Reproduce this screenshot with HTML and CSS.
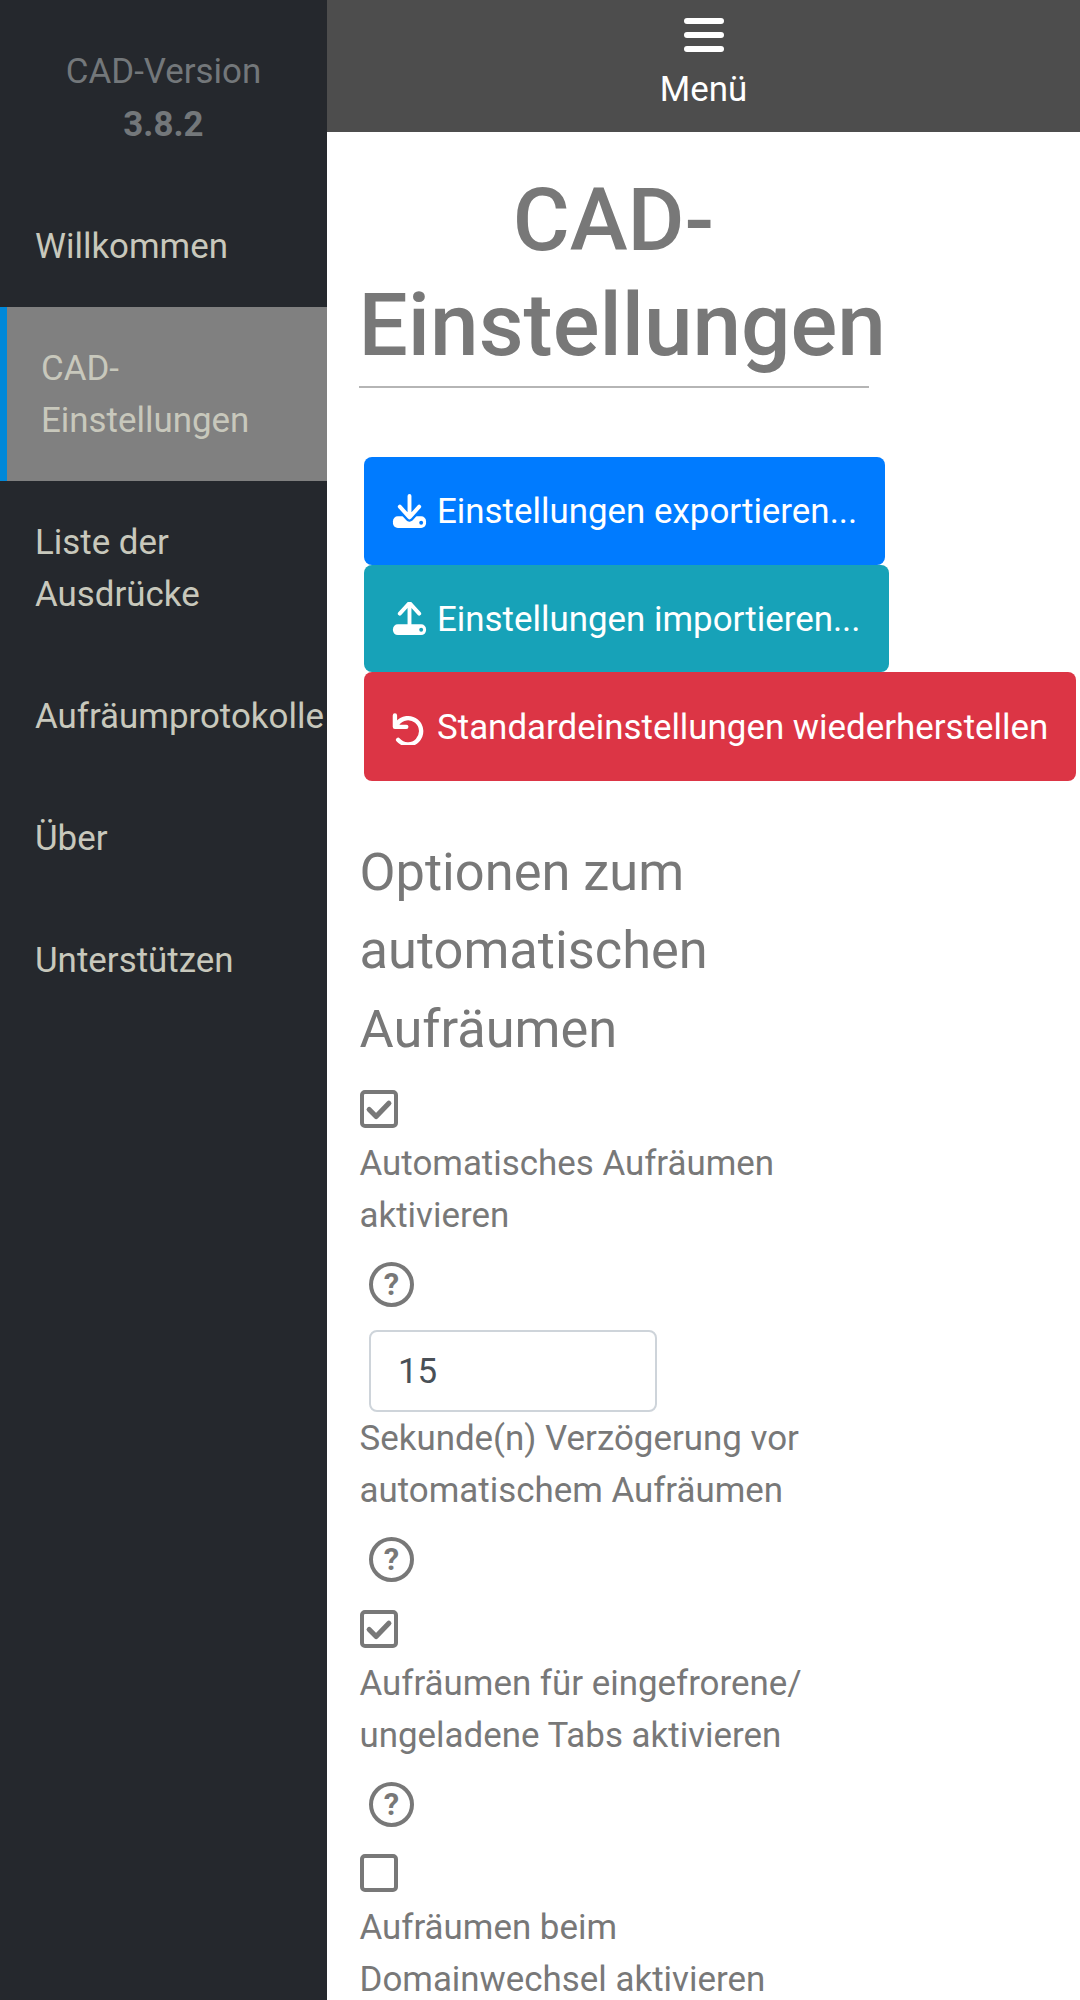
FILE: index.html
```html
<!DOCTYPE html>
<html>

<head>
    <title>CAD-Einstellungen</title>
    <link rel="stylesheet" href="styles.css">
</head>

<body>
    <div id="app">
        <nav id="sidebar">
            <div id="version">CAD-Version<strong>3.8.2</strong></div>
            <a class="nav-item">Willkommen</a>
            <a class="nav-item active">CAD-Einstellungen</a>
            <a class="nav-item">Liste der Ausdrücke</a>
            <a class="nav-item">Aufräumprotokolle</a>
            <a class="nav-item">Über</a>
            <a class="nav-item">Unterstützen</a>
        </nav>
        <div id="main">
            <div id="topbar">
                <svg class="menu-icon" viewBox="0 0 40 34">
                    <rect x="0" y="0" width="40" height="6" rx="3" />
                    <rect x="0" y="14" width="40" height="6" rx="3" />
                    <rect x="0" y="28" width="40" height="6" rx="3" />
                </svg>
                <span>Menü</span>
            </div>
            <div id="content">
                <h1>CAD-Einstellungen</h1>
                <div id="actions">
                    <div><button class="btn btn-blue">
                        <svg class="btn-icon" viewBox="0 0 36 36">
                            <rect class="tray" x="1" y="23" width="34" height="12" rx="5" />
                            <path class="knockout" d="M8 13l10 11 10-11" />
                            <path class="line" d="M18 2v22M8 13l10 11 10-11" />
                            <circle class="hole" cx="30" cy="29.500" r="2" />
                        </svg>
                        Einstellungen exportieren...</button></div>
                    <div><button class="btn btn-teal">
                        <svg class="btn-icon" viewBox="0 0 36 36">
                            <rect class="tray" x="1" y="23" width="34" height="11" rx="5" />
                            <path class="line" d="M18 24V2M8 12L18 1l10 11" />
                            <circle class="hole" cx="30" cy="28.500" r="2" />
                        </svg>
                        Einstellungen importieren...</button></div>
                    <div><button class="btn btn-red">
                        <svg class="btn-icon" viewBox="0 0 36 36">
                            <path class="line undo" d="M6.300 30.700A13.500 13.500 0 1 0 5.500 14M3 5.700V17.300H14.700" />
                        </svg>
                        Standardeinstellungen wiederherstellen</button></div>
                </div>

                <h3>Optionen zum automatischen Aufräumen</h3>

                <div class="option">
                    <span class="checkbox">
                        <svg viewBox="0 0 28 28"><path d="M5 15l6.700 6.700L24 9" /></svg>
                    </span>
                    <label>Automatisches Aufräumen aktivieren</label>
                    <span class="help">?</span>
                </div>
                <div class="option">
                    <input class="number" type="text" value="15">
                    <label>Sekunde(n) Verzögerung vor automatischem Aufräumen</label>
                    <span class="help">?</span>
                </div>
                <div class="option">
                    <span class="checkbox">
                        <svg viewBox="0 0 28 28"><path d="M5 15l6.700 6.700L24 9" /></svg>
                    </span>
                    <label>Aufräumen für eingefrorene/ ungeladene Tabs aktivieren</label>
                    <span class="help">?</span>
                </div>
                <div class="option">
                    <span class="checkbox"></span>
                    <label>Aufräumen beim Domainwechsel aktivieren</label>
                </div>
            </div>
        </div>
    </div>
</body>

</html>
```

FILE: styles.css
```css
html,
body {
    margin: 0;
    height: 2000px;
    overflow: hidden;
    background: white;
    font-family: Roboto, "Liberation Sans", sans-serif;
    font-size: 34.9px;
    line-height: 52px;
    color: #787878;
}

#app {
    display: flex;
    height: 2000px;
}

/* left column */
#sidebar {
    width: 327px;
    flex-shrink: 0;
    background: #25282d;
    color: #c8c8bc;
}

#version {
    padding: 46px 0 34px;
    text-align: center;
    color: #73777a;
}

#version strong {
    display: block;
    margin-top: 1px;
}

.nav-item {
    display: block;
    padding: 36px 35px 34px;
}

.nav-item.active {
    padding-left: 34px;
    padding-right: 60px;
    background: #808080;
    border-left: 7px solid #0088d9;
}

/* right column */
#main {
    flex: 1;
    min-width: 0;
}

#topbar {
    height: 132px;
    display: flex;
    flex-direction: column;
    align-items: center;
    background: #4d4d4d;
    color: white;
}

.menu-icon {
    width: 40px;
    height: 34px;
    margin-top: 18px;
    fill: white;
}

#topbar span {
    margin-top: 18px;
    line-height: 40px;
}

#content {
    padding: 0 0 0 32.500px;
}

h1 {
    width: 510px;
    margin: 36px 0 0 -1px;
    padding-bottom: 8px;
    border-bottom: 2px solid #b5b5b5;
    font-size: 87.3px;
    line-height: 105px;
    font-weight: 500;
    text-align: center;
}

#actions {
    margin-top: 69px;
    padding-left: 4.500px;
}

#actions div {
    display: flex;
}

.btn {
    display: inline-flex;
    align-items: center;
    box-sizing: border-box;
    height: 107.500px;
    padding: 2px 28px 0 29px;
    border: none;
    border-radius: 8px;
    font-family: inherit;
    font-size: 34.9px;
    color: white;
    white-space: nowrap;
}

.btn-blue {
    background: #007bff;
    --btn-bg: #007bff;
}

.btn-teal {
    background: #17a2b8;
    --btn-bg: #17a2b8;
}

.btn-red {
    height: 109px;
    background: #dc3545;
    --btn-bg: #dc3545;
}

.btn-icon {
    width: 35px;
    height: 35px;
    margin: 0 10px 0 -1px;
}

.tray {
    fill: white;
}

.hole {
    fill: var(--btn-bg);
}

.line,
.knockout {
    fill: none;
    stroke-linecap: round;
    stroke-linejoin: round;
}

.line {
    stroke: white;
    stroke-width: 4;
}

.line.undo {
    stroke-width: 4.500;
}

.knockout {
    stroke: var(--btn-bg);
    stroke-width: 9;
}

h3 {
    width: 510px;
    margin: 51.500px 0 16.500px;
    font-size: 52.4px;
    line-height: 78.600px;
    font-weight: 400;
}

.option {
    display: flex;
    flex-direction: column;
    align-items: flex-start;
    width: 505px;
}

.checkbox {
    display: block;
    box-sizing: border-box;
    width: 38px;
    height: 38px;
    margin: 5.500px 0 10px;
    border: 4.500px solid #787878;
    border-radius: 5px;
}

.checkbox svg {
    display: block;
    width: 29px;
    height: 29px;
    fill: none;
    stroke: #787878;
    stroke-width: 5;
    stroke-linecap: round;
    stroke-linejoin: round;
}

.help {
    display: flex;
    justify-content: center;
    align-items: center;
    box-sizing: border-box;
    width: 45px;
    height: 45px;
    margin: 20px 0 22px 9.500px;
    border: 4.500px solid #787878;
    border-radius: 50%;
    font-size: 31px;
    font-weight: 700;
    line-height: 1;
}

.number {
    display: block;
    box-sizing: border-box;
    width: 288px;
    height: 82px;
    margin: 1px 0 1px 9.500px;
    padding: 0 27px;
    border: 2px solid #ced4da;
    border-radius: 8px;
    font-family: inherit;
    font-size: 34.9px;
    color: #495057;
}
```
